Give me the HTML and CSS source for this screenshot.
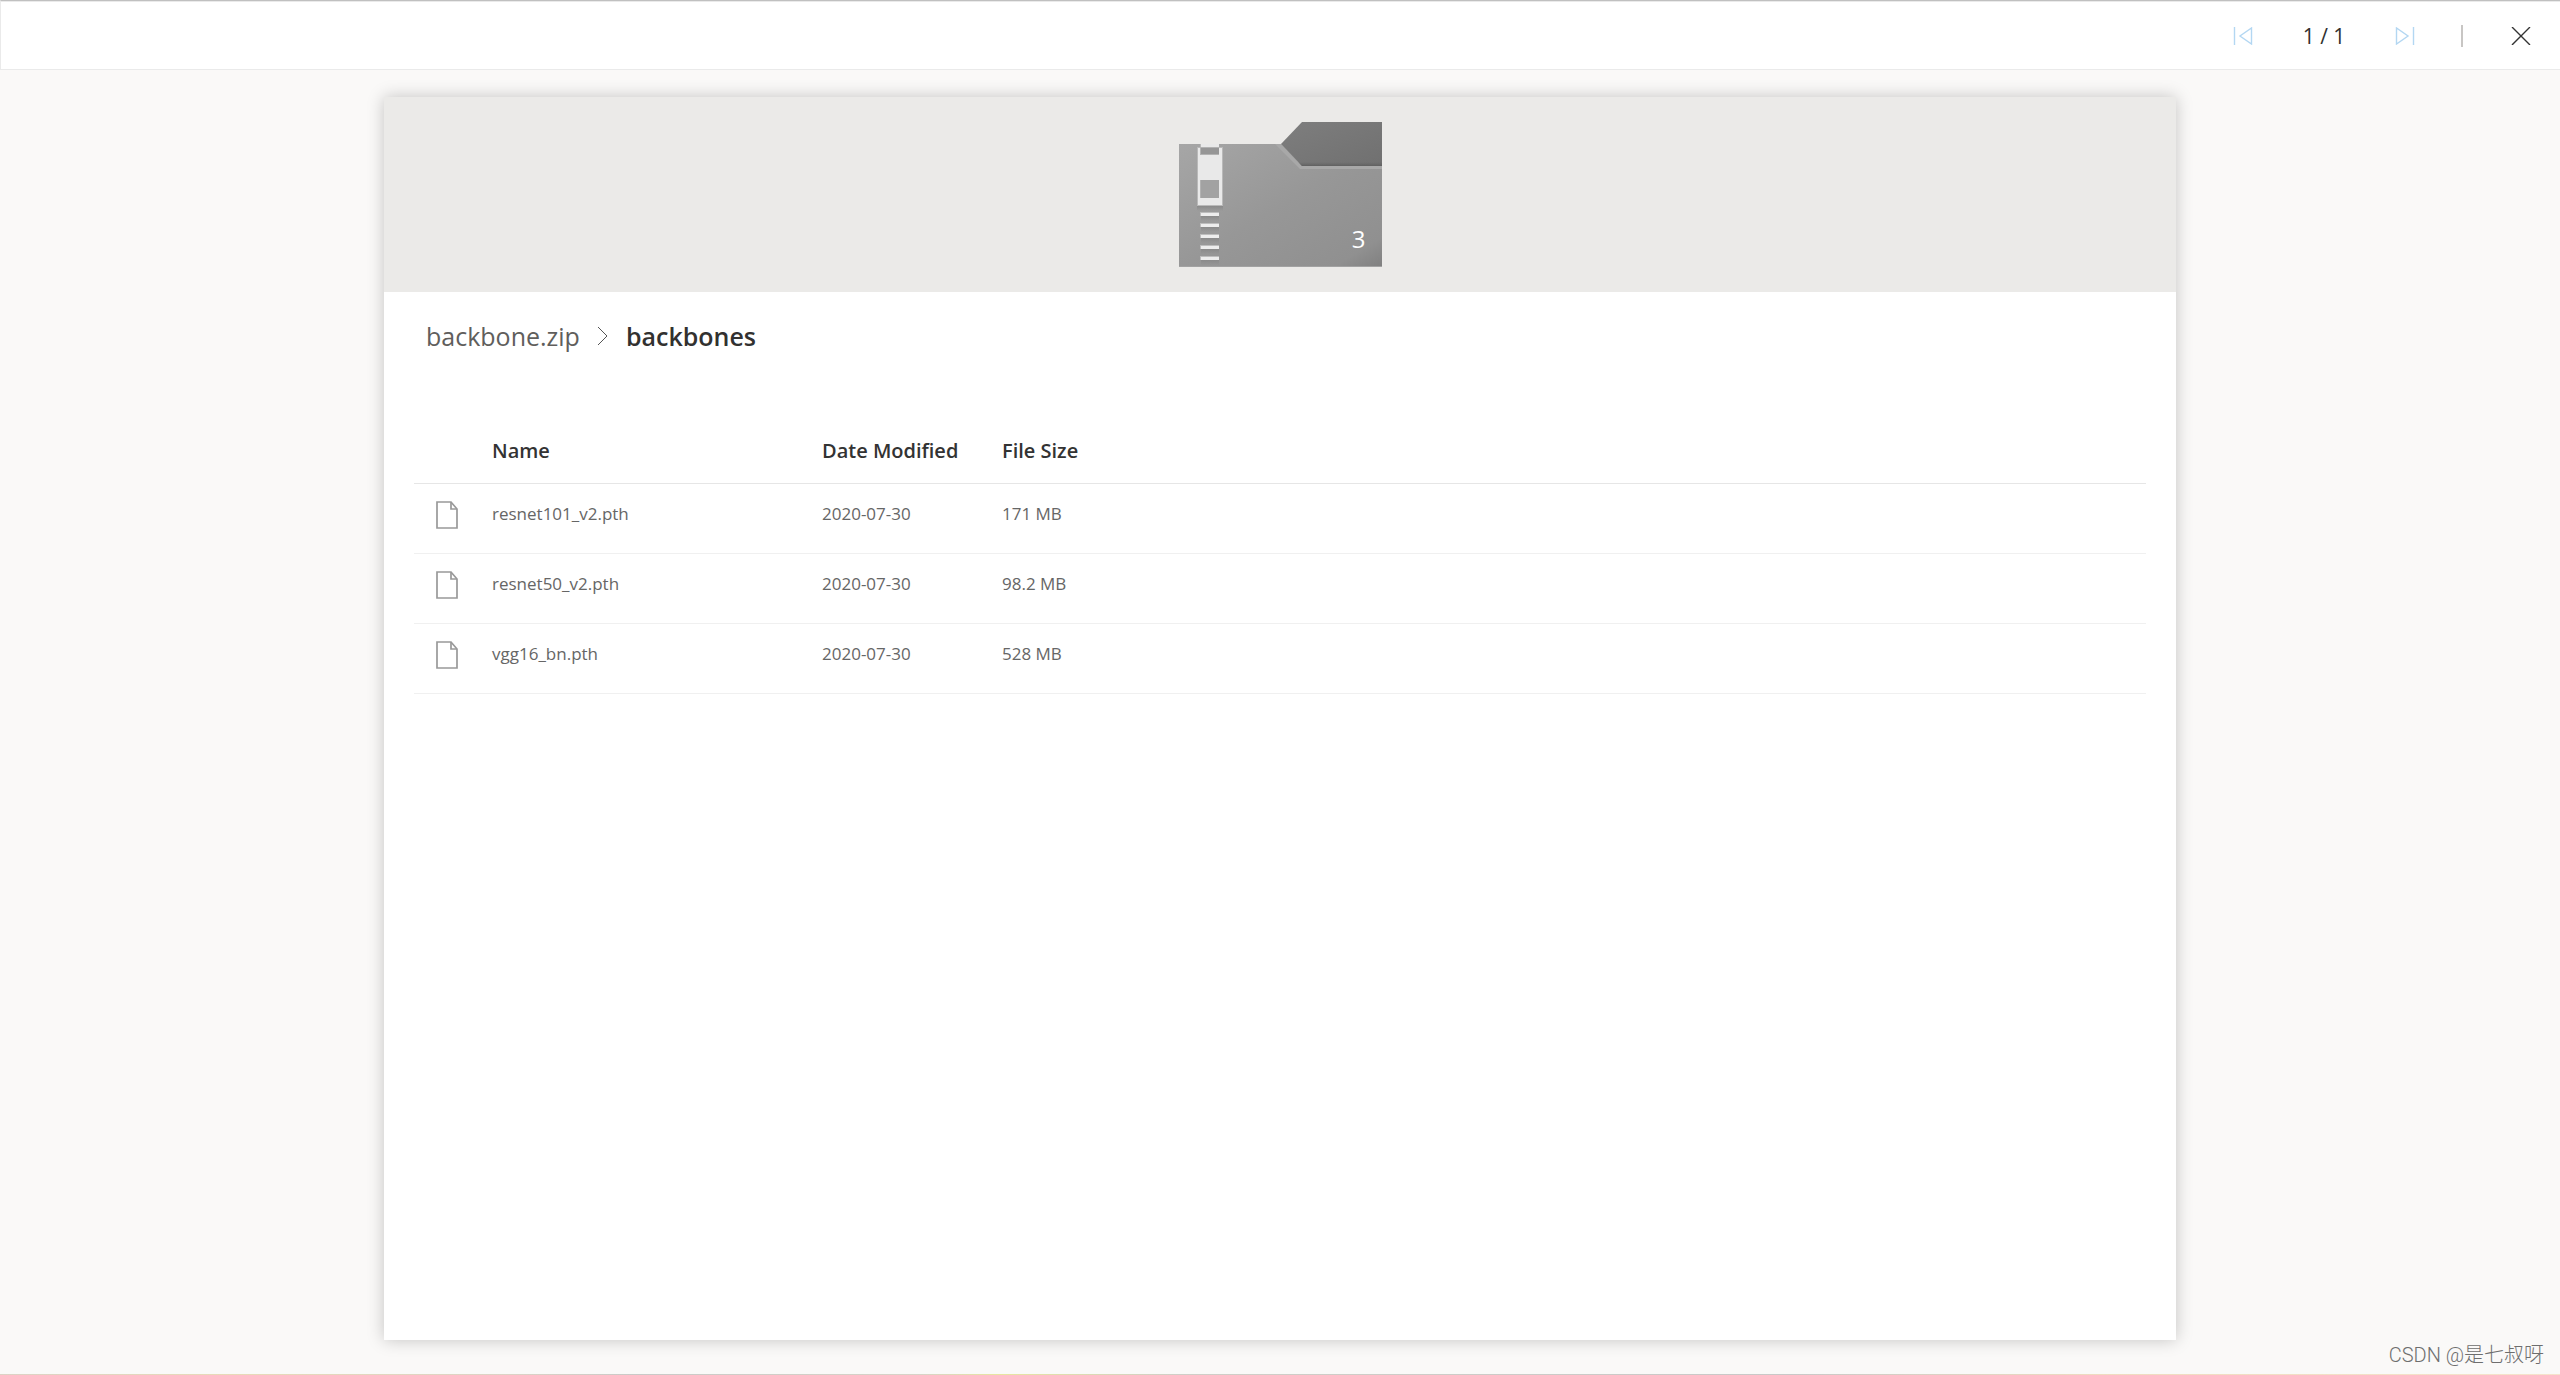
FILE: index.html
```html
<!DOCTYPE html>
<html lang="en">
<head>
<meta charset="utf-8">
<title>backbone.zip</title>
<link rel="stylesheet" href="styles.css">
</head>
<body>
<header class="toolbar">
  <button class="icon-button" type="button" aria-label="Previous" disabled>
    <svg width="20" height="18" viewBox="0 0 20 18" fill="none" stroke="currentColor" stroke-width="1.4"><path d="M1.5 0v18M18.5 1v16L7 9z"/></svg>
  </button>
  <span class="page-count">1 / 1</span>
  <button class="icon-button" type="button" aria-label="Next" disabled>
    <svg width="20" height="18" viewBox="0 0 20 18" fill="none" stroke="currentColor" stroke-width="1.4"><path d="M18.5 0v18M1.5 1v16L13 9z"/></svg>
  </button>
  <span class="divider"></span>
  <button class="icon-button close" type="button" aria-label="Close">
    <svg width="20" height="18" viewBox="0 0 20 18" fill="none" stroke="currentColor" stroke-width="1.4"><path d="M1 0l18 18M19 0L1 18"/></svg>
  </button>
</header>
<main class="stage">
  <article class="card">
    <div class="banner">
      <div class="folder">
        <svg width="203" height="145" viewBox="0 0 203 145">
          <defs>
            <linearGradient id="body" x1="0" y1="0" x2="1" y2="1"><stop offset="0" stop-color="#a6a6a6"/><stop offset=".5" stop-color="#979797"/><stop offset=".88" stop-color="#909090"/><stop offset="1" stop-color="#808080"/></linearGradient>
            <linearGradient id="tab" x1="0" y1="0" x2="1" y2="1"><stop offset="0" stop-color="#7e7e7e"/><stop offset="1" stop-color="#707070"/></linearGradient>
            <linearGradient id="tabshade" x1="0" y1="0" x2="0" y2="1"><stop offset="0" stop-color="#666" stop-opacity="0"/><stop offset="1" stop-color="#606060"/></linearGradient>
            <linearGradient id="shade" x1="0" y1="0" x2="0" y2="1"><stop offset="0" stop-color="#8a8a8a"/><stop offset="1" stop-color="#8a8a8a" stop-opacity="0"/></linearGradient>
          </defs>
          <path fill="url(#body)" d="M0 22h102l21 22h80v101H0z"/>
          <path fill="#a8a8a8" d="M96 22h6l21 21h80v4h-82z"/>
          <path fill="url(#tab)" d="M123 0h80v44h-80l-21-22z"/>
          <path fill="url(#tabshade)" d="M119 40h84v4h-80z"/>
          <path fill="#a2a2a2" d="M0 144h203v1H0z"/>
          <rect fill="url(#shade)" x="18" y="84" width="26" height="5"/>
          <path fill="#b9b9b9" d="M18 25h3v-3h19v3h4v59H18z"/>
          <path fill="#e9e9e9" d="M19 26h2v7h19v-7h3v57H19zM22 22h18v3H22z"/>
          <path fill="#b2b2b2" d="M21 25h19v8H21zM21 58h19v18H21z"/>
          <path fill="#969696" d="M22 26h18v6H22z"/>
          <path fill="#a2a2a2" d="M22 58h18v18H22z"/>
          <rect fill="url(#shade)" x="22" y="94" width="18" height="5"/>
          <rect fill="url(#shade)" x="22" y="105" width="18" height="5"/>
          <rect fill="url(#shade)" x="22" y="116" width="18" height="5"/>
          <rect fill="url(#shade)" x="22" y="127" width="18" height="5"/>
          <rect fill="url(#shade)" x="22" y="138" width="18" height="5"/>
          <path fill="#bdbdbd" d="M21 90h19v4H21zM21 101h19v4H21zM21 112h19v4H21zM21 123h19v4H21zM21 134h19v4H21z"/>
          <path fill="#ededed" d="M22 91h18v3H22zM22 102h18v3H22zM22 113h18v3H22zM22 124h18v3H22zM22 135h18v3H22z"/>
        </svg>
        <span class="folder-count">3</span>
      </div>
    </div>
    <nav class="crumbs" aria-label="Path">
      <a class="crumb" href="#">backbone.zip</a>
      <svg class="chevron" width="12" height="20" viewBox="0 0 12 20" fill="none" stroke="#555"><path d="M1 1l9 9-9 9"/></svg>
      <span class="crumb current">backbones</span>
    </nav>
    <table class="files">
      <thead>
        <tr><th class="col-icon"></th><th class="col-name">Name</th><th class="col-date">Date Modified</th><th>File Size</th></tr>
      </thead>
      <tbody>
        <tr>
          <td class="col-icon"><svg width="22" height="28" viewBox="0 0 22 28" fill="none" stroke="#999" stroke-width="1.7"><path d="M1 1h14l6 7v19H1z"/><path d="M15 1v7h6"/></svg></td>
          <td>resnet101_v2.pth</td><td>2020-07-30</td><td>171 MB</td>
        </tr>
        <tr>
          <td class="col-icon"><svg width="22" height="28" viewBox="0 0 22 28" fill="none" stroke="#999" stroke-width="1.7"><path d="M1 1h14l6 7v19H1z"/><path d="M15 1v7h6"/></svg></td>
          <td>resnet50_v2.pth</td><td>2020-07-30</td><td>98.2 MB</td>
        </tr>
        <tr>
          <td class="col-icon"><svg width="22" height="28" viewBox="0 0 22 28" fill="none" stroke="#999" stroke-width="1.7"><path d="M1 1h14l6 7v19H1z"/><path d="M15 1v7h6"/></svg></td>
          <td>vgg16_bn.pth</td><td>2020-07-30</td><td>528 MB</td>
        </tr>
      </tbody>
    </table>
  </article>
</main>
<div class="bottom-edge"></div>
<span class="watermark">CSDN @是七叔呀</span>
</body>
</html>
```

FILE: styles.css
```css
* { box-sizing: border-box; }

body {
  margin: 0;
  min-height: 100vh;
  display: flex;
  flex-direction: column;
  background: #faf9f8;
  color: #323130;
  font-family: "Open Sans", "Noto Sans", sans-serif;
}

.toolbar {
  display: flex;
  align-items: center;
  justify-content: flex-end;
  height: 70px;
  padding: 2px 29px 0 0;
  background: #fff;
  border: 1px solid #eaeaea;
  border-top: 1px solid #c0c0c0;
  border-right: 0;
  box-shadow: inset 0 1px #eaeaea;
}

.icon-button {
  display: flex;
  padding: 0;
  border: 0;
  background: none;
  color: #333;
}

.icon-button:disabled { color: #b3d7f2; }

.page-count {
  width: 142px;
  font-size: 21px;
  text-align: center;
}

.divider {
  width: 2px;
  height: 22px;
  margin: 0 48px 0 46px;
  background: #c8c6c4;
}

.stage {
  flex: 1;
  display: flex;
  justify-content: center;
  padding: 27px 0 34px;
}

.card {
  width: 70%;
  background: #fff;
  box-shadow: 0 0 16px rgba(0, 0, 0, 0.22);
}

.banner {
  display: flex;
  justify-content: center;
  padding: 25px 0;
  background: #ebeae8;
}

.folder { position: relative; display: flex; }

.folder-count {
  position: absolute;
  right: 16px;
  bottom: 12px;
  color: #fff;
  font-size: 24px;
  line-height: 32px;
}

.crumbs {
  display: flex;
  align-items: center;
  gap: 17px;
  padding: 24px 42px;
  font-size: 25px;
  line-height: 40px;
}

.crumb { color: #605e5c; text-decoration: none; }

.crumb.current { color: #323130; font-weight: 600; }

.files {
  width: calc(100% - 60px);
  margin: 35px 30px 0;
  border-collapse: separate;
  border-spacing: 0;
  table-layout: fixed;
  font-size: 17px;
  color: #666;
}

.files th {
  height: 69px;
  padding: 2px 0 0;
  border-bottom: 1px solid #e6e6e6;
  color: #333;
  font-size: 20px;
  font-weight: 600;
  text-align: left;
}

.files td {
  height: 70px;
  padding: 0 0 11px;
  border-bottom: 1px solid #f0f0f0;
}

.files .col-icon { width: 78px; padding: 0 0 7px 22px; }

.files .col-icon svg { display: block; }

.files .col-name { width: 330px; }

.files .col-date { width: 180px; }

.bottom-edge {
  height: 1px;
  background: linear-gradient(90deg, #dcd3c6, #e8dbb8 9%, #dcd3c6 20%, #c9cac8 25%, #d8d4c8 36%, #e8e6a0 39%, #d0cfc8 46%, #c9c9c8 70%, #efdcc0 82%, #f5e4cc);
}

.watermark {
  position: absolute;
  right: 16px;
  bottom: 6px;
  color: #6e6e6e;
  font-family: Roboto, "Noto Sans CJK SC", sans-serif;
  font-size: 20px;
  font-weight: 300;
  line-height: 28px;
}
```
